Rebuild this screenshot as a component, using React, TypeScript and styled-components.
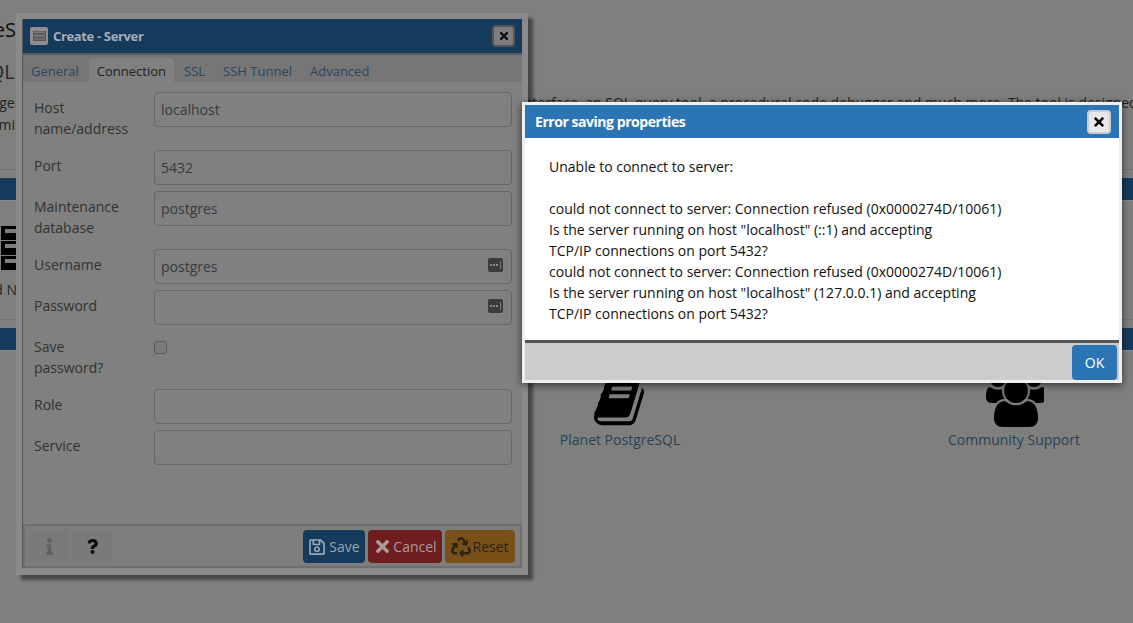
import styled, { createGlobalStyle } from 'styled-components'
import { FaInfo, FaQuestion, FaRecycle, FaRegSave, FaTimes } from 'react-icons/fa'

const Global = createGlobalStyle`
  html, body {
    margin: 0;
    padding: 0;
    background: #7f807e;
    overflow: hidden;
  }
  body {
    font-family: 'Open Sans', 'Liberation Sans', sans-serif;
    font-size: 14px;
    line-height: 21px;
    color: #1c1c1c;
  }
`

function ServerGlyph({ size = 56 }: { size?: number }) {
  return (
    <svg width={size} height={size * 0.79} viewBox="0 0 56 44" fill="currentColor">
      <path fillRule="evenodd" d="M0 0h56v14H0zM4 3v4h48V3zM0 15h56v14H0zM4 18v4h48v-4zM0 30h56v14H0zM4 33v4h48v-4z" />
    </svg>
  )
}

function BookGlyph() {
  return (
    <BookSvg width="54" height="54" viewBox="0 0 1792 1792" fill="currentColor">
      <path d="M1639 478q40 57 18 129l-275 906q-19 64-76.500 107.500t-122.500 43.500h-923q-77 0-148.500-53.500t-99.500-131.500q-24-67-2-127 0-4 3-27t4-37q1-8-3-21.500t-3-19.500q2-11 8-21t16.500-23.500 16.500-23.500q23-38 45-91.500t30-91.500q3-10 .5-30t-.5-28q3-11 17-28t17-23q21-36 42-92t25-90q1-9-2.500-32t.5-28q4-13 22-30.500t22-22.500q19-26 42.500-84.500t27.500-96.500q1-8-3-25.500t-2-26.500q2-8 9-18t18-23 17-21q8-12 16.500-30.500t15-35 16-36 19.500-32 26.500-23.500 36-11.500 47.500 5.500l-1 3q38-9 51-9h761q74 0 114 56t18 130l-274 906q-36 119-71.500 153.500t-128.500 34.500h-869q-27 0-38 15-11 16-1 43 24 70 144 70h923q29 0 56-15.500t35-41.500l300-987q7-22 5-57 38 15 59 43zm-1064 2q-4 13 2 22.500t20 9.500h608q13 0 25.500-9.500t16.500-22.500l21-64q4-13-2-22.500t-20-9.500h-608q-13 0-25.500 9.500t-16.500 22.500zm-83 256q-4 13 2 22.500t20 9.500h608q13 0 25.500-9.500t16.500-22.500l21-64q4-13-2-22.500t-20-9.500h-608q-13 0-25.500 9.500t-16.500 22.500z" />
    </BookSvg>
  )
}

function UsersGlyph() {
  return (
    <svg width="60" height="56" viewBox="0 0 1920 1792" fill="currentColor">
      <path d="M657 896q-162 5-265 128h-134q-82 0-138-40.500t-56-118.500q0-353 124-353 6 0 43.500 21t97.500 42.500 119 21.500q67 0 133-23-5 37-5 66 0 139 81 256zm1071 637q0 120-73 189.500t-194 69.500h-874q-121 0-194-69.500t-73-189.500q0-53 3.500-103.500t14-109 26.500-108.500 43-97.500 62-81 85.500-53.500 111.500-20q10 0 43 21.500t73 48 107 48 135 21.500 135-21.500 107-48 73-48 43-21.500q61 0 111.500 20t85.500 53.500 62 81 43 97.500 26.500 108.500 14 109 3.500 103.500zm-1024-1277q0 106-75 181t-181 75-181-75-75-181 75-181 181-75 181 75 75 181zm704 384q0 159-112.500 271.500t-271.500 112.500-271.500-112.500-112.500-271.500 112.500-271.500 271.500-112.500 271.500 112.500 112.500 271.500zm576 225q0 78-56 118.500t-138 40.500h-134q-103-123-265-128 81-117 81-256 0-29-5-66 66 23 133 23 59 0 119-21.500t97.500-42.500 43.500-21q124 0 124 353zm-128-609q0 106-75 181t-181 75-181-75-75-181 75-181 181-75 181 75 75 181z" />
    </svg>
  )
}

function KeyBadge() {
  return (
    <Badge>
      <svg width="15" height="14" viewBox="0 0 15 14">
        <rect width="15" height="14" rx="2" fill="#3b3b3b" />
        <rect x="2" y="6" width="2" height="2" fill="#8a8a8a" />
        <rect x="5" y="6" width="2" height="2" fill="#8a8a8a" />
        <rect x="8" y="6" width="2" height="2" fill="#8a8a8a" />
        <rect x="12" y="3" width="1" height="8" fill="#7a7a7a" />
      </svg>
    </Badge>
  )
}

function Field({ label, value, keyed }: { label: string; value?: string; keyed?: boolean }) {
  return (
    <Row>
      <Label>{label}</Label>
      <InputWrap>
        <TextInput readOnly value={value ?? ''} />
        {keyed && <KeyBadge />}
      </InputWrap>
    </Row>
  )
}

export default function App() {
  return (
    <>
      <Global />
      <Viewport>
        <Dashboard>
          <Heading>Management Tools for PostgreSQL</Heading>
          <SubHeading>Feature rich | Maximises PostgreSQL</SubHeading>
          <Intro>
            pgAdmin is an Open Source administration and management tool for the PostgreSQL database. It includes a graphical administration interface, an SQL query tool, a procedural code debugger and much more. The tool is designed to
            <br />
            answer the needs of developers, DBAs and system administrators
          </Intro>

          <Section>
            <SectionBar />
            <Links $top={25} $bottom={19}>
              <LinkCell $col={1} $span={2}>
                <IconBox $height={53}><ServerGlyph /></IconBox>
                <LinkText $plain>Add New Server</LinkText>
              </LinkCell>
            </Links>
          </Section>

          <Section>
            <SectionBar />
            <Links $top={20} $bottom={24}>
              <LinkCell $col={3}>
                <IconBox $height={58}><BookGlyph /></IconBox>
                <LinkText>Planet PostgreSQL</LinkText>
              </LinkCell>
              <LinkCell $col={4}>
                <IconBox $height={58}><UsersGlyph /></IconBox>
                <LinkText>Community Support</LinkText>
              </LinkCell>
            </Links>
          </Section>
        </Dashboard>

        <CreateDialog>
          <CreateInner>
            <CreateTitle>
              <TitleIcon><ServerGlyph size={13} /></TitleIcon>
              Create - Server
              <CreateClose><FaTimes size={12} /></CreateClose>
            </CreateTitle>
            <Tabs>
              <Tab>General</Tab>
              <Tab $active>Connection</Tab>
              <Tab>SSL</Tab>
              <Tab>SSH Tunnel</Tab>
              <Tab>Advanced</Tab>
            </Tabs>
            <Form>
              <Field label="Host name/address" value="localhost" />
              <Field label="Port" value="5432" />
              <Field label="Maintenance database" value="postgres" />
              <Field label="Username" value="postgres" keyed />
              <Field label="Password" keyed />
              <Row>
                <Label>Save password?</Label>
                <CheckBox />
              </Row>
              <Field label="Role" />
              <Field label="Service" />
            </Form>
            <Footer>
              <HelpButton $muted><FaInfo size={17} /></HelpButton>
              <HelpButton><FaQuestion size={15} /></HelpButton>
              <Spacer />
              <ActionButton $bg="#163a5c" $fg="#9aa7b4" $width={62} $gap={3}><FaRegSave size={18} />Save</ActionButton>
              <ActionButton $bg="#6e1e1e" $fg="#ab9c9c" $width={74} $gap={1}><FaTimes size={19} />Cancel</ActionButton>
              <ActionButton $bg="#7a5019" $fg="#2a2416" $width={70} $gap={1}><FaRecycle size={20} />Reset</ActionButton>
            </Footer>
          </CreateInner>
        </CreateDialog>

        <ErrorDialog>
          <ErrorTitle>
            Error saving properties
            <ErrorClose><FaTimes size={14} /></ErrorClose>
          </ErrorTitle>
          <ErrorBody>
            Unable to connect to server:
            <br />
            <br />
            could not connect to server: Connection refused (0x0000274D/10061)
            <br />
            Is the server running on host "localhost" (::1) and accepting
            <br />
            TCP/IP connections on port 5432?
            <br />
            could not connect to server: Connection refused (0x0000274D/10061)
            <br />
            Is the server running on host "localhost" (127.0.0.1) and accepting
            <br />
            TCP/IP connections on port 5432?
          </ErrorBody>
          <ErrorFooter>
            <OkButton>OK</OkButton>
          </ErrorFooter>
        </ErrorDialog>
      </Viewport>
    </>
  )
}

const Viewport = styled.div`
  position: relative;
  width: 1133px;
  height: 623px;
  overflow: hidden;
  background: #7f807e;
`

const Dashboard = styled.div`
  width: 1576px;
  margin-left: -365px;
  padding-top: 17px;
`

const Heading = styled.div`
  padding-left: 83px;
  font-size: 20px;
  line-height: 26px;
  color: #0d0d0d;
  white-space: nowrap;
`

const SubHeading = styled.div`
  margin-top: 16px;
  padding-left: 35px;
  font-size: 20px;
  line-height: 26px;
  color: #2a2a2a;
  white-space: nowrap;
`

const Intro = styled.p`
  margin: 7px 0 33px;
  padding-left: 15px;
  line-height: 22px;
  color: #1f1f1f;
  white-space: nowrap;
`

const Section = styled.section`
  border-top: 1px solid #707070;
  padding-top: 8px;
`

const SectionBar = styled.div`
  height: 22px;
  background: #163a5c;
  border-bottom: 1px solid #8a8f94;
`

const Links = styled.div<{ $top: number; $bottom: number }>`
  display: grid;
  grid-template-columns: repeat(4, 1fr);
  padding: ${p => p.$top}px 0 ${p => p.$bottom}px;
`

const LinkCell = styled.div<{ $col: number; $span?: number }>`
  grid-column: ${p => p.$col} / span ${p => p.$span ?? 1};
  display: flex;
  flex-direction: column;
  align-items: center;
  color: #000;
`

const IconBox = styled.div<{ $height: number }>`
  display: flex;
  justify-content: center;
  align-items: flex-start;
  height: ${p => p.$height}px;
`

const BookSvg = styled.svg`
  margin: 4px 0 0 2px;
`

const LinkText = styled.span<{ $plain?: boolean }>`
  color: ${p => (p.$plain ? '#262626' : '#2a405c')};
`

const CreateDialog = styled.div`
  position: absolute;
  left: 16px;
  top: 13px;
  width: 512px;
  height: 562px;
  box-sizing: border-box;
  padding: 6px 6px 7px;
  background: #8a8a8a;
  box-shadow: 5px 5px 3px rgba(0, 0, 0, 0.45);
`

const CreateInner = styled.div`
  display: flex;
  flex-direction: column;
  height: 100%;
  border-left: 1px solid #555;
  background: #808080;
`

const CreateTitle = styled.div`
  display: flex;
  align-items: center;
  height: 34px;
  padding: 0 7px;
  background: #163a5c;
  border-bottom: 2px solid #5c5c5c;
  color: #a6afb9;
  font-size: 13px;
  font-weight: 700;
  letter-spacing: -0.35px;
`

const TitleIcon = styled.span`
  display: flex;
  align-items: center;
  justify-content: center;
  width: 18px;
  height: 18px;
  margin-right: 5px;
  border-radius: 2px;
  background: #8e8e8e;
  color: #555;
`

const CreateClose = styled.span`
  display: flex;
  align-items: center;
  justify-content: center;
  width: 19px;
  height: 18px;
  margin-left: auto;
  border: 2px solid #50555c;
  border-radius: 4px;
  background: #7e7e7e;
  color: #0d0d0d;
`

const Tabs = styled.div`
  display: flex;
  align-items: flex-end;
  gap: 2px;
  height: 27px;
  background: #767676;
`

const Tab = styled.div<{ $active?: boolean }>`
  height: 24px;
  padding: 0 8px;
  border-radius: 4px 4px 0 0;
  font-size: 13px;
  line-height: 26px;
  background: ${p => (p.$active ? '#808080' : 'transparent')};
  color: ${p => (p.$active ? '#1f1f1f' : '#294561')};
`

const Form = styled.div`
  flex: 1;
  display: flex;
  flex-direction: column;
  gap: 6px;
  padding: 10px 10px 0 11px;
`

const Row = styled.div`
  display: grid;
  grid-template-columns: 120px 1fr;
  min-height: 35px;
`

const Label = styled.label`
  padding: 5px 0;
  width: 100px;
  color: #33322f;
`

const InputWrap = styled.div`
  position: relative;
`

const TextInput = styled.input`
  display: block;
  width: 100%;
  height: 35px;
  box-sizing: border-box;
  padding: 0 6px;
  border: 1px solid #676767;
  border-radius: 4px;
  outline: none;
  background: #808080;
  color: #383a42;
  font: inherit;
`

const Badge = styled.span`
  position: absolute;
  top: 9px;
  right: 9px;
  display: flex;
`

const CheckBox = styled.span`
  width: 11px;
  height: 11px;
  margin-top: 10px;
  border: 1px solid #5b5b5b;
  border-radius: 3px;
  background: #7a7a7a;
`

const Footer = styled.div`
  display: flex;
  align-items: flex-start;
  gap: 3px;
  height: 44px;
  box-sizing: border-box;
  padding: 4px 5px 0 4px;
  border: 2px solid #6f6f6f;
  background: #7d7d7d;
`

const Spacer = styled.span`
  flex: 1;
`

const HelpButton = styled.span<{ $muted?: boolean }>`
  display: flex;
  align-items: center;
  justify-content: center;
  width: 40px;
  height: 33px;
  border-radius: 4px;
  background: #7a7a7a;
  color: ${p => (p.$muted ? '#606060' : '#0a0a0a')};
`

const ActionButton = styled.span<{ $bg: string; $fg: string; $width: number; $gap: number }>`
  display: flex;
  align-items: center;
  justify-content: center;
  gap: ${p => p.$gap}px;
  width: ${p => p.$width}px;
  height: 33px;
  border-radius: 4px;
  background: ${p => p.$bg};
  color: ${p => p.$fg};
`

const ErrorDialog = styled.div`
  position: absolute;
  left: 522px;
  top: 102px;
  width: 600px;
  box-sizing: border-box;
  border: 3px solid #efefef;
  background: #fff;
  box-shadow: 0 2px 8px rgba(0, 0, 0, 0.6);
`

const ErrorTitle = styled.div`
  display: flex;
  align-items: center;
  height: 33px;
  padding: 0 8px 0 10px;
  background: #2c75b5;
  color: #fff;
  font-weight: 700;
  letter-spacing: -0.45px;
`

const ErrorClose = styled.span`
  display: flex;
  align-items: center;
  justify-content: center;
  width: 20px;
  height: 20px;
  margin-left: auto;
  border: 2px solid #c8ccd2;
  border-radius: 4px;
  background: #e8e8e8;
  color: #000;
`

const ErrorBody = styled.div`
  height: 202px;
  box-sizing: border-box;
  padding: 18px 24px 0;
  color: #111;
`

const ErrorFooter = styled.div`
  display: flex;
  justify-content: flex-end;
  align-items: flex-end;
  height: 37px;
  padding-right: 2px;
  border-top: 3px solid #555;
  background: #ccc;
`

const OkButton = styled.span`
  display: flex;
  align-items: center;
  justify-content: center;
  width: 45px;
  height: 35px;
  border-radius: 4px;
  background: #2c75b5;
  color: #fff;
`
